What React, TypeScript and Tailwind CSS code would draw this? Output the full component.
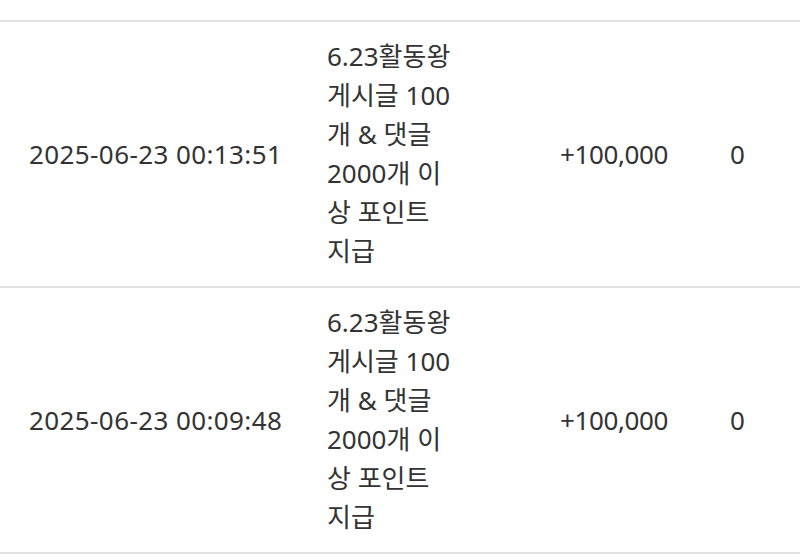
import React from "react"

type Row = {
  date: string
  desc: string
  amount: string
  balance: string
}

const rows: Row[] = [
  {
    date: "2025-06-23 00:13:51",
    desc: "6.23활동왕 게시글 100개 & 댓글 2000개 이상 포인트 지급",
    amount: "+100,000",
    balance: "0",
  },
  {
    date: "2025-06-23 00:09:48",
    desc: "6.23활동왕 게시글 100개 & 댓글 2000개 이상 포인트 지급",
    amount: "+100,000",
    balance: "0",
  },
]

export default function App() {
  return (
    <div
      className="h-[559px] w-[800px] overflow-hidden bg-white text-[26px] leading-[39px] text-[#333]"
      style={{ fontFamily: '"Noto Sans", "Noto Sans CJK KR", sans-serif' }}
    >
      <div className="h-[22px] border-b-2 border-[#e2e2e2]" />
      {rows.map((row) => (
        <div
          key={row.date}
          className="flex items-center border-b-2 border-[#e2e2e2] py-[15px]"
        >
          <div className="w-[327px] shrink-0 pl-[29px] tracking-[0.4px]">{row.date}</div>
          <div className="w-[127px] shrink-0">{row.desc}</div>
          <div className="w-[106px] shrink-0" />
          <div className="w-[170px] shrink-0 tracking-[-0.4px]">{row.amount}</div>
          <div className="shrink-0">{row.balance}</div>
        </div>
      ))}
    </div>
  )
}
